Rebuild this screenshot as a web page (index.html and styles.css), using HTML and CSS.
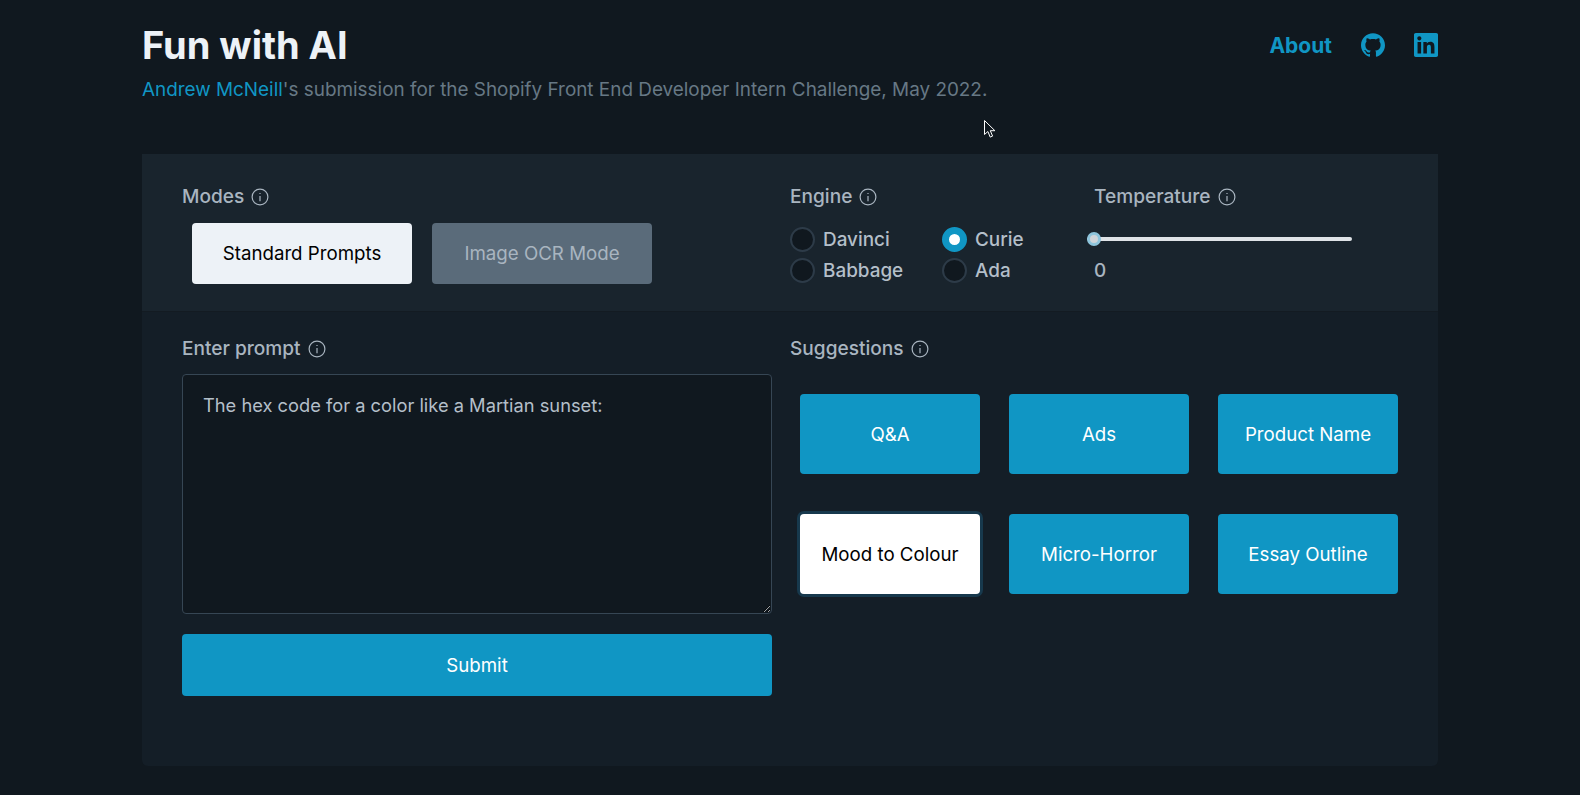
FILE: index.html
```html
<!DOCTYPE html>
<html lang="en">
<head>
    <meta charset="UTF-8">
    <meta name="viewport" content="width=device-width, initial-scale=1.0">
    <title>Fun with AI</title>
    <link rel="stylesheet" href="styles.css">
</head>
<body>
    <div class="page">
        <header class="top">
            <div>
                <h1>Fun with AI</h1>
                <p class="intro"><a href="#">Andrew McNeill</a>'s submission for the Shopify Front End Developer Intern Challenge, May 2022.</p>
            </div>
            <nav class="links">
                <a href="#" class="about">About</a>
                <a href="#" class="social" aria-label="GitHub">
                    <svg viewBox="0 0 24 24"><path d="M12 .297c-6.63 0-12 5.373-12 12 0 5.303 3.438 9.8 8.205 11.385.6.113.82-.258.82-.577 0-.285-.01-1.04-.015-2.04-3.338.724-4.042-1.61-4.042-1.61C4.422 18.07 3.633 17.7 3.633 17.7c-1.087-.744.084-.729.084-.729 1.205.084 1.838 1.236 1.838 1.236 1.07 1.835 2.809 1.305 3.495.998.108-.776.417-1.305.76-1.605-2.665-.3-5.466-1.332-5.466-5.93 0-1.31.465-2.38 1.235-3.22-.135-.303-.54-1.523.105-3.176 0 0 1.005-.322 3.3 1.23.96-.267 1.98-.399 3-.405 1.02.006 2.04.138 3 .405 2.28-1.552 3.285-1.23 3.285-1.23.645 1.653.24 2.873.12 3.176.765.84 1.23 1.91 1.23 3.22 0 4.61-2.805 5.625-5.475 5.92.42.36.81 1.096.81 2.22 0 1.606-.015 2.896-.015 3.286 0 .315.21.69.825.57C20.565 22.092 24 17.592 24 12.297c0-6.627-5.373-12-12-12"/></svg>
                </a>
                <a href="#" class="social" aria-label="LinkedIn">
                    <svg viewBox="0 0 24 24"><path d="M20.447 20.452h-3.554v-5.569c0-1.328-.027-3.037-1.852-3.037-1.853 0-2.136 1.445-2.136 2.939v5.667H9.351V9h3.414v1.561h.046c.477-.9 1.637-1.85 3.37-1.85 3.601 0 4.267 2.37 4.267 5.455v6.286zM5.337 7.433c-1.144 0-2.063-.926-2.063-2.065 0-1.138.92-2.063 2.063-2.063 1.14 0 2.064.925 2.064 2.063 0 1.139-.925 2.065-2.064 2.065zm1.782 13.019H3.555V9h3.564v11.452zM22.225 0H1.771C.792 0 0 .774 0 1.729v20.542C0 23.227.792 24 1.771 24h20.451C23.2 24 24 23.227 24 22.271V1.729C24 .774 23.2 0 22.222 0h.003z"/></svg>
                </a>
            </nav>
        </header>

        <main class="card">
            <section class="settings">
                <div>
                    <div class="label">Modes
                        <svg class="info" viewBox="0 0 18 18"><circle cx="9" cy="9" r="7.9"/><path d="M9 8v5.2M9 4.9v1"/></svg>
                    </div>
                    <div class="modes">
                        <button class="btn mode-on">Standard Prompts</button>
                        <button class="btn mode-off">Image OCR Mode</button>
                    </div>
                </div>
                <div>
                    <div class="label">Engine
                        <svg class="info" viewBox="0 0 18 18"><circle cx="9" cy="9" r="7.9"/><path d="M9 8v5.2M9 4.9v1"/></svg>
                    </div>
                    <div class="engines">
                        <label class="radio"><span class="dot"></span>Davinci</label>
                        <label class="radio"><span class="dot dot-on"></span>Curie</label>
                        <label class="radio"><span class="dot"></span>Babbage</label>
                        <label class="radio"><span class="dot"></span>Ada</label>
                    </div>
                </div>
                <div>
                    <div class="label">Temperature
                        <svg class="info" viewBox="0 0 18 18"><circle cx="9" cy="9" r="7.9"/><path d="M9 8v5.2M9 4.9v1"/></svg>
                    </div>
                    <input class="slider" type="range" min="0" max="1" step="0.1" value="0">
                    <div class="temp-value">0</div>
                </div>
            </section>

            <section class="prompting">
                <div>
                    <div class="label">Enter prompt
                        <svg class="info" viewBox="0 0 18 18"><circle cx="9" cy="9" r="7.9"/><path d="M9 8v5.2M9 4.9v1"/></svg>
                    </div>
                    <textarea class="prompt">The hex code for a color like a Martian sunset:</textarea>
                    <button class="btn btn-blue submit">Submit</button>
                </div>
                <div>
                    <div class="label">Suggestions
                        <svg class="info" viewBox="0 0 18 18"><circle cx="9" cy="9" r="7.9"/><path d="M9 8v5.2M9 4.9v1"/></svg>
                    </div>
                    <div class="suggestions">
                        <button class="btn btn-blue">Q&amp;A</button>
                        <button class="btn btn-blue">Ads</button>
                        <button class="btn btn-blue">Product Name</button>
                        <button class="btn btn-picked">Mood to Colour</button>
                        <button class="btn btn-blue">Micro-Horror</button>
                        <button class="btn btn-blue">Essay Outline</button>
                    </div>
                </div>
            </section>
        </main>
    </div>

    <!-- mouse pointer caught in the capture -->
    <svg class="pointer" viewBox="0 0 12 18"><path d="M.5.5v14l3.4-3 2.3 5.6 2.4-1-2.3-5.4h4.6z"/></svg>
</body>
</html>
```

FILE: styles.css
```css
* {
    box-sizing: border-box;
}
body {
    margin: 0;
    background-color: #10181f;
    color: #a9b5c0;
    font-family: Inter, "Noto Sans", sans-serif;
    font-size: 18px;
    line-height: 27px;
}
a {
    color: #1096c4;
    text-decoration: none;
}
.page {
    width: 1296px;
    margin: 0 auto;
}
.top {
    display: flex;
    justify-content: space-between;
    padding-top: 23px;
    height: 154px;
}
h1 {
    margin: 0 0 9px;
    color: #edf2f7;
    font-size: 38px;
    line-height: 44px;
    font-weight: 700;
}
.intro {
    margin: 0;
    color: #677885;
    font-size: 18.9px;
}
.links {
    display: flex;
    align-items: center;
    gap: 29px;
    height: 44px;
}
.about {
    font-size: 21px;
    font-weight: 700;
}
.social {
    display: block;
    width: 24px;
    height: 24px;
}
.social svg {
    display: block;
    width: 24px;
    height: 24px;
    fill: #1096c4;
}
.card {
    height: 612px;
    background-color: #141e27;
    border-radius: 0 0 6px 6px;
    overflow: hidden;
}
.settings {
    display: grid;
    grid-template-columns: 608px 304px 1fr;
    height: 158px;
    padding: 29px 40px 0;
    background-color: #19242d;
    border-bottom: 1px solid #131b22;
}
.label {
    display: flex;
    align-items: center;
    gap: 7px;
    font-size: 19.1px;
    font-weight: 500;
}
.info {
    width: 18px;
    height: 18px;
    fill: none;
    stroke: #a9b5c0;
    stroke-width: 1.2;
}
.btn {
    height: 62px;
    padding-top: 1px;
    border: 0;
    border-radius: 4px;
    font-family: inherit;
    font-size: 18.7px;
}
.btn-blue {
    background-color: #1096c4;
    color: #fff;
}
.modes {
    display: flex;
    gap: 20px;
    padding: 13px 10px 0;
}
.modes .btn {
    width: 220px;
    height: 61px;
}
.mode-on {
    background-color: #edf2f7;
    color: #000;
}
.mode-off {
    background-color: #5a6b7a;
    color: #a9b5c0;
}
.engines {
    display: grid;
    grid-template-columns: 152px 1fr;
    row-gap: 5px;
    padding-top: 16px;
}
.radio {
    display: flex;
    align-items: center;
    gap: 8px;
    font-size: 18.9px;
    font-weight: 500;
    color: #b4bfc9;
    height: 26px;
}
.dot {
    width: 25px;
    height: 25px;
    border: 2px solid #2d3b48;
    border-radius: 50%;
    background-color: #10181f;
}
.dot-on {
    border: 7px solid #1096c4;
    background-color: #fff;
}
.slider {
    -webkit-appearance: none;
    appearance: none;
    display: block;
    width: 265px;
    height: 14px;
    margin: 22px 0 0 -7px;
    background: transparent;
}
.slider::-webkit-slider-runnable-track {
    height: 4px;
    border-radius: 2px;
    background-color: #dfe3e7;
}
.slider::-webkit-slider-thumb {
    -webkit-appearance: none;
    width: 14px;
    height: 14px;
    margin-top: -5px;
    border: 3px solid #8ec5dc;
    border-radius: 50%;
    background-color: #cfd5da;
}
.temp-value {
    margin-top: 11px;
    font-size: 18.9px;
    font-weight: 500;
}
.prompting {
    display: grid;
    grid-template-columns: 590px 1fr;
    column-gap: 18px;
    padding: 23px 40px 0;
}
.prompt {
    display: block;
    width: 590px;
    height: 240px;
    margin-top: 12px;
    padding: 17px 20px;
    background-color: #10181f;
    color: #b4bfc9;
    border: 1px solid #364654;
    border-radius: 4px;
    font-family: inherit;
    font-size: 18.3px;
    line-height: 27px;
    outline: none;
}
.submit {
    display: block;
    width: 590px;
    margin-top: 20px;
}
.suggestions {
    display: grid;
    grid-template-columns: repeat(3, 180px);
    grid-auto-rows: 80px;
    gap: 40px 29px;
    padding: 32px 10px 0;
}
.suggestions .btn {
    height: 80px;
}
.btn-picked {
    background-color: #fff;
    color: #000;
    box-shadow: 0 0 0 3px #17394d;
}
.pointer {
    position: absolute;
    left: 984px;
    top: 120px;
    width: 12px;
    height: 18px;
    fill: #10181f;
    stroke: #fff;
    stroke-width: 1;
}
```
